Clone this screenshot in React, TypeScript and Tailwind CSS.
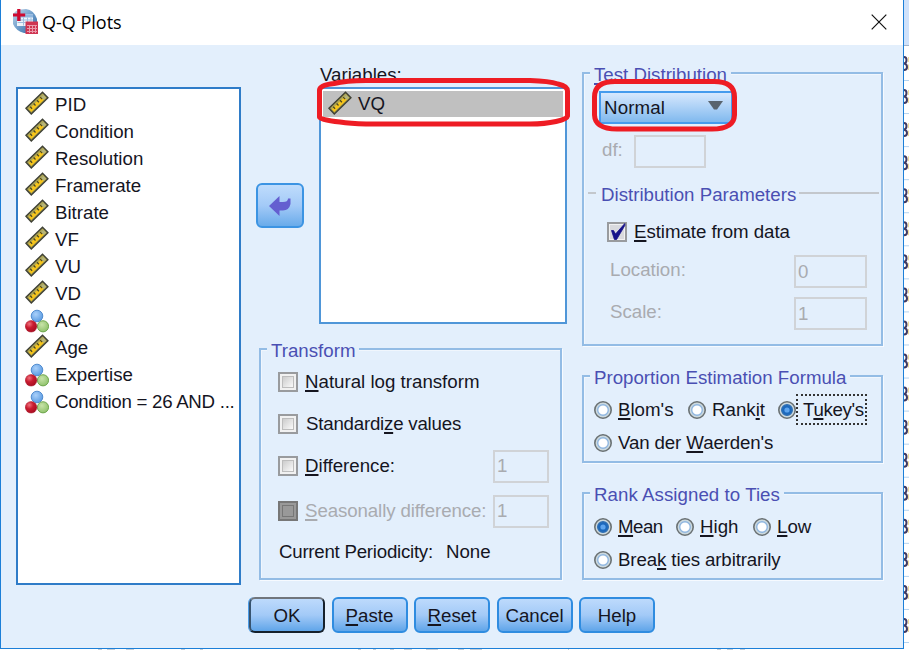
import React from "react";

function RulerIcon() {
  return (
    <svg width="24" height="24" viewBox="0 0 24 24" className="shrink-0">
      <path d="M.900 17.200 17.500 1.200 23 6.800 6.300 23Z" fill="#8d8a4c" stroke="#3f4136" strokeWidth="1.300" />
      <path d="M2.800 17.300 17.600 3.100 21.100 6.700 6.300 21.100Z" fill="#f6c51c" />
      <path d="M15.200 5.400 17.600 3.100 21.100 6.700 18.800 8.900Z" fill="#b4b47c" />
      <path d="M2.800 17.300 17.600 3.100 18.500 4 3.700 18.200Z" fill="#a9a55e" />
      <path d="m5.200 15.800 1.900 2M8.600 12.500l1.900 2M12 9.200l1.900 2M15.200 6.100l1.900 2" stroke="#4f4a20" strokeWidth="1.300" />
    </svg>
  );
}

function NominalIcon() {
  return (
    <svg width="24" height="24" viewBox="0 0 24 24" className="shrink-0">
      <defs>
        <radialGradient id="nb" cx=".4" cy=".35" r=".7"><stop offset="0" stopColor="#a9d0fa" /><stop offset="1" stopColor="#5798e0" /></radialGradient>
        <radialGradient id="nr" cx=".35" cy=".3" r=".75"><stop offset="0" stopColor="#f0707c" /><stop offset=".45" stopColor="#c91c30" /><stop offset="1" stopColor="#a50d20" /></radialGradient>
        <radialGradient id="ng" cx=".4" cy=".35" r=".7"><stop offset="0" stopColor="#c8e3a9" /><stop offset="1" stopColor="#8cc068" /></radialGradient>
      </defs>
      <circle cx="12" cy="7" r="5.800" fill="url(#nb)" stroke="#4684cc" strokeWidth=".9" />
      <circle cx="18" cy="17.300" r="5.600" fill="url(#ng)" stroke="#67a044" strokeWidth=".9" />
      <circle cx="6.100" cy="17.300" r="5.800" fill="url(#nr)" stroke="#a8162a" strokeWidth=".5" />
    </svg>
  );
}

function AppIcon() {
  return (
    <svg width="25" height="25" viewBox="0 0 25 25" className="shrink-0">
      <defs>
        <linearGradient id="globe" x1="0" y1="0" x2="1" y2="1">
          <stop offset="0" stopColor="#c5d8ea" /><stop offset=".5" stopColor="#6d9dcb" /><stop offset="1" stopColor="#2d659f" />
        </linearGradient>
      </defs>
      <path d="M3 2Q8 0 13 0 21 1 24 10V24H11Q3 22 0 15V5Z" fill="url(#globe)" />
      <path d="M8 5.500h12v8h-7v3.500H4V12H8Z" fill="#eef4fb" />
      <path d="M8 5.500h12v3H8Z" fill="#8db5de" />
      <path d="M4.500 13.500h8M10.500 8.500v8M14.500 8.500v5M18 8.500v4M8 11h12" stroke="#9fbfdf" strokeWidth="1" />
      <path d="M4.200 0h3.200v4.400h4.800v3H7.400V12H4.200V7.400H0V4.400h4.200Z" fill="#cf0a30" />
      <rect x="12.500" y="12.500" width="12.500" height="12.500" fill="#cf3552" />
      <path d="M14 16.500h10M14 19.500h10M14 22.500h10M16.500 16v8M19.500 16v8M22.500 16v8" stroke="#eb9aab" strokeWidth="1" />
    </svg>
  );
}

function U({ children }: { children: string }) {
  return <span className="underline decoration-[1.500px] underline-offset-[2px] [text-decoration-skip-ink:none]">{children}</span>;
}

function Group({ title, className, children }: { title: React.ReactNode; className: string; children: React.ReactNode }) {
  return (
    <section className={`border-2 border-[#93bce5] shadow-[1px_1px_0_#f6faff,inset_1px_1px_0_#f0f6fd] ${className}`}>
      <h2 className="-mt-[11px] ml-[6px] flex h-[24px] w-fit items-center whitespace-nowrap bg-[#e3effc] px-[4px] text-[#4a4fb3]">{title}</h2>
      {children}
    </section>
  );
}

function Check({ checked, disabled }: { checked?: boolean; disabled?: boolean }) {
  return (
    <span className={`flex size-[20px] shrink-0 items-center justify-center border-2 ${disabled ? "border-[#777] bg-[#999]" : "border-[#999b9e] bg-[#f1f1f1]"}`}>
      {checked ? (
        <svg width="18" height="20" viewBox="0 0 18 20" className="shrink-0 overflow-visible">
          <rect x="2" y="3" width="14" height="14" fill="#d9dade" />
          <path d="M3.500 8.500 5.500 8.500 7.500 12 16.800 1.500 16.800 3.500 8.600 17.500 6.400 17.500Z" fill="#15128a" stroke="#15128a" strokeWidth=".8" />
        </svg>
      ) : (
        <span className={`size-[12px] border ${disabled ? "border-[#777] bg-[#999]" : "border-[#bdbdbd] bg-linear-to-br from-[#ccc] to-[#fafafa]"}`} />
      )}
    </span>
  );
}

function Radio({ on }: { on?: boolean }) {
  return (
    <svg width="18" height="18" viewBox="0 0 18 18" className="shrink-0">
      <circle cx="9" cy="9" r="8.200" fill="#ccd9de" stroke="#6b7274" strokeWidth="1.600" />
      <circle cx="9" cy="9" r="5.300" fill={on ? "#1c69bd" : "#fff"} stroke={on ? "#2e6fb4" : "#8fb6e0"} strokeWidth="1.400" />
      {on ? <circle cx="9" cy="9" r="2.600" fill="#5ea5ee" /> : null}
    </svg>
  );
}

function Field({ className, children }: { className: string; children?: React.ReactNode }) {
  return <span className={`flex h-[33px] shrink-0 items-center border-2 border-[#d0d3d7] pl-[2px] text-[#a9abb0] ${className}`}>{children}</span>;
}

function PushButton({ primary, children }: { primary?: boolean; children: React.ReactNode }) {
  return (
    <button className={`flex h-[36px] w-[76px] items-center justify-center rounded-[6px] border-2 bg-linear-to-b from-[#bddafc] via-[#a3caf7] to-[#5fa5e9] pt-[2px] ${primary ? "border-t-[#70757c] border-r-[#15202b] border-b-[#15202b] border-l-[#37536f] shadow-[-1px_0_0_#4b9be6]" : "border-[#2f8ce0]"}`}>
      {children}
    </button>
  );
}

const variables: { name: string; scale: boolean }[] = [
  { name: "PID", scale: true },
  { name: "Condition", scale: true },
  { name: "Resolution", scale: true },
  { name: "Framerate", scale: true },
  { name: "Bitrate", scale: true },
  { name: "VF", scale: true },
  { name: "VU", scale: true },
  { name: "VD", scale: true },
  { name: "AC", scale: false },
  { name: "Age", scale: true },
  { name: "Expertise", scale: false },
  { name: "Condition = 26 AND ...", scale: false },
];

export default function App() {
  return (
    <div className="relative flex h-[650px] w-[909px] flex-col overflow-hidden bg-white font-['Liberation_Sans',Arial,sans-serif] text-[18.700px] leading-[22px] text-[#15151f]">
      <div className="flex h-[649px]">
        <main className="flex w-[904px] flex-col border-r border-b border-l border-[#1c7fd8] bg-[#e3effc]">
          <header className="flex h-[45px] items-center bg-white pr-[16px] pb-[2px] pl-[12px]">
            <AppIcon />
            <h1 className="mt-[1px] ml-[4px] grow font-['Open_Sans',sans-serif] text-[18px] text-black">Q-Q Plots</h1>
            <svg width="16" height="16" viewBox="0 0 16 16"><path d="M.700.700 15.300 15.300M15.300.700.700 15.300" stroke="#111" strokeWidth="1.200" /></svg>
          </header>

          <div className="flex h-[540px] pl-[15px]">
            <ul className="mt-[42px] h-[498px] w-[225px] border-2 border-[#2f7cc8] bg-white pt-[2px] pl-[7px]">
              {variables.map(({ name, scale }) => (
                <li key={name} className="flex h-[27px] items-center whitespace-nowrap">
                  {scale ? <span className="-mt-[3px]"><RulerIcon /></span> : <NominalIcon />}
                  <span className={name.length > 15 ? "ml-[6px] tracking-[-0.270px]" : "ml-[6px]"}>{name}</span>
                </li>
              ))}
            </ul>

            <div className="w-[341px]">
              <div className="flex h-[279px] pl-[15px]">
                <button className="mt-[138px] flex h-[45px] w-[48px] items-center justify-center rounded-[6px] border-2 border-[#3c94e3] bg-linear-to-b from-[#bfdcfc] via-[#a3caf7] to-[#69abea]">
                  <svg width="22" height="20" viewBox="0 0 22 20"><path d="M0 10 10.500 0V6H14Q19 6 19 2.500H21.500V8Q20 14.500 14 14.500H10.500V20Z" fill="#645fd0" /></svg>
                </button>
                <div className="ml-[15px] w-[248px] pt-[18px]">
                  <div className="h-[24px] pt-[1px] pl-[1px]">Variables:</div>
                  <div className="h-[237px] border-2 border-[#4f96d8] bg-white p-[2px]">
                    <div className="flex h-[26px] items-center bg-[#c0c0c0] pl-[5px]">
                      <span className="-mt-[2px]"><RulerIcon /></span>
                      <span className="ml-[6px]">VQ</span>
                    </div>
                  </div>
                </div>
              </div>

              <Group title="Transform" className="mt-[24px] ml-[18px] h-[232px] w-[303px]">
                <div className="-mt-[2px] pl-[17px]">
                  <div className="flex h-[42px] items-center gap-[7px]"><Check /><span><U>N</U>atural log transform</span></div>
                  <div className="flex h-[42px] items-center gap-[8px]"><Check /><span className="tracking-[-0.220px]">Standardi<U>z</U>e values</span></div>
                  <div className="flex h-[42px] items-center gap-[7px]"><Check /><span><U>D</U>ifference:</span><Field className="mr-[11px] ml-auto w-[56px]">1</Field></div>
                  <div className="mt-[2px] flex h-[44px] items-center"><Check disabled /><span className="ml-[7px] whitespace-nowrap tracking-[-0.100px] text-[#a9abb0]"><U>S</U>easonally difference:</span><Field className="mr-[11px] ml-auto w-[56px]">1</Field></div>
                  <div className="mt-[8px] flex h-[22px] items-center gap-[13px]"><span className="pl-[1px] tracking-[-0.250px]">Current Periodicity:</span><span>None</span></div>
                </div>
              </Group>
            </div>

            <div className="w-[301px] pt-[27px]">
              <Group title={<span><U>T</U>est Distribution</span>} className="h-[274px]">
                <div className="mt-[4px] ml-[15px] flex h-[33px] w-[134px] items-center justify-between border-2 border-[#459bed] bg-linear-to-b from-[#d7e8fd] to-[#80b9ee] pr-[8px] pl-[3px]">
                  <span className="tracking-[0.150px]">Normal</span>
                  <svg width="15" height="9" viewBox="0 0 15 9" className="-mt-[4px]"><path d="M0 0H15L9 8.500H6Z" fill="#59646e" /></svg>
                </div>
                <div className="mt-[11px] flex h-[33px] items-center pl-[18px] text-[#a9abb0]">
                  <span className="-mt-[3px] w-[32px]">df:</span><Field className="w-[72px]" />
                </div>
                <div className="mt-[16px] flex h-[22px] items-center gap-[5px] pr-[2px] pl-[4px] text-[#4a4fb3]">
                  <span className="mb-[4px] h-[2px] w-[8px] bg-[#c3c7cc]" /><span className="whitespace-nowrap">Distribution Parameters</span><span className="-ml-[2px] mb-[4px] h-[2px] grow bg-[#c3c7cc]" />
                </div>
                <div className="mt-[16px] flex h-[20px] items-center gap-[7px] pl-[23px]"><Check checked /><span className="tracking-[-0.050px]"><U>E</U>stimate from data</span></div>
                <div className="mt-[13px] flex h-[33px] items-center justify-between pr-[14px] pl-[26px] text-[#a9abb0]"><span className="-mt-[3px]">Location:</span><Field className="w-[73px]">0</Field></div>
                <div className="mt-[9px] flex h-[33px] items-center justify-between pr-[14px] pl-[26px] text-[#a9abb0]"><span className="-mt-[3px]">Scale:</span><Field className="w-[73px]">1</Field></div>
              </Group>

              <Group title="Proportion Estimation Formula" className="mt-[29px] h-[88px]">
                <div className="mt-[3px] flex h-[33px] items-center pl-[10px]">
                  <Radio /><span className="ml-[6px] w-[70px]"><U>B</U>lom's</span>
                  <Radio /><span className="ml-[6px] w-[66px]">Rank<U>i</U>t</span>
                  <Radio on /><span className="flex h-[31px] w-[71px] items-center border-2 border-dotted border-[#333] pl-[5px]"><span className="whitespace-nowrap tracking-[-0.350px]">T<U>u</U>key's</span></span>
                </div>
                <div className="flex h-[33px] items-center gap-[6px] pl-[10px]"><Radio /><span className="tracking-[-0.120px]">Van der <U>W</U>aerden's</span></div>
              </Group>

              <Group title={<span className="tracking-[0.050px]">Rank Assigned to Ties</span>} className="mt-[29px] h-[88px]">
                <div className="mt-[3px] flex h-[33px] items-center pl-[10px]">
                  <Radio on /><span className="ml-[6px] w-[58px] tracking-[-0.500px]"><U>M</U>ean</span>
                  <Radio /><span className="ml-[6px] w-[53px]"><U>H</U>igh</span>
                  <Radio /><span className="ml-[6px]"><U>L</U>ow</span>
                </div>
                <div className="flex h-[33px] items-center gap-[6px] pl-[10px]"><Radio /><span className="tracking-[-0.120px]">Brea<U>k</U> ties arbitrarily</span></div>
              </Group>
            </div>
          </div>

          <footer className="mt-[12px] flex gap-[6.500px] pl-[248px]">
            <PushButton primary>OK</PushButton>
            <PushButton><span><U>P</U>aste</span></PushButton>
            <PushButton><span><U>R</U>eset</span></PushButton>
            <PushButton>Cancel</PushButton>
            <PushButton>Help</PushButton>
          </footer>
        </main>

        <aside className="w-[5px] overflow-hidden">
          <div className="h-[46px] border-b border-[#9fb3cb] bg-[#cfe2fb]" />
          <svg width="5" height="603" viewBox="0 0 5 603">
            {Array.from({ length: 18 }, (_, i) => (
              <g key={i} transform={`translate(0 ${i * 33.06})`}>
                <path d="M0 34.500H5" stroke="#b5d3ef" />
                <path d="M0 11Q2.500 11 2.500 14 2.500 17 0 17.500 3 18 3 21 3 24 0 24" fill="none" stroke="#403a62" strokeWidth="2" />
                <path d="M4.500 11V16M4.500 18.500V24" stroke="#f3dd9a" strokeWidth="1" />
              </g>
            ))}
          </svg>
        </aside>
      </div>
      <svg width="909" height="1" viewBox="0 0 909 1"><path d="M98 .500h4M107 .500h8M126 .500h8M181 .500h4M200 .500h3M358 .500h3M373 .500h3M390 .500h4M404 .500h8M426 .500h12M458 .500h6M470 .500h12M568 .500h1M717 .500h4M727 .500h6M740 .500h5" stroke="#c5ced9" /></svg>

      <svg className="pointer-events-none absolute inset-0" width="909" height="650" viewBox="0 0 909 650" fill="none" stroke="#ee1c24" strokeWidth="5">
        <path d="M319.500 117V90Q320 85 334 83.500 346 80.500 366 80.500H530Q549 81 558 84 567.500 86 567.500 91V116Q567 119 556 121.500 545 124 530 124H366Q350 123.500 340 122 320 120 319.500 117Z" />
        <path d="M594.500 115V97Q594.500 81.500 615 81.500H714Q734.500 81.500 734.500 97V115Q734 129 712 129H617Q595 129 594.500 115Z" />
      </svg>
    </div>
  );
}
